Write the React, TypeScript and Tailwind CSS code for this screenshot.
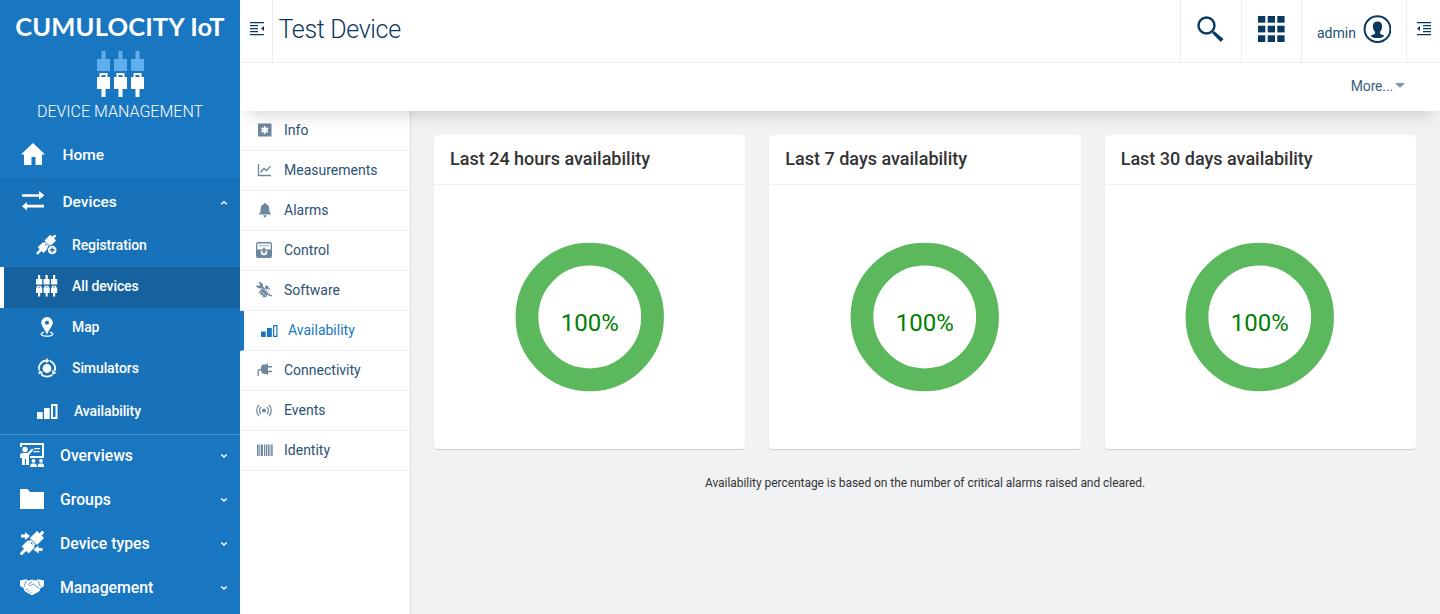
import React from "react";

type IconProps = { w: number; h: number; className?: string; children: React.ReactNode };

function Svg({ w, h, className = "", children }: IconProps) {
  return (
    <svg width={w} height={h} viewBox={`0 0 ${w} ${h}`} fill="currentColor" className={`shrink-0 ${className}`}>
      {children}
    </svg>
  );
}

function LogoIcon() {
  return (
    <Svg w={48} h={47} className="mt-3">
      {[0.5, 17.5, 34.5].map((x) => (
        <g key={x} transform={`translate(${x} 0)`}>
          <path d="M5 0h4v8h4.500v12H.5V8H5z" fill="#61aeee" />
          <path d="M3 22h8v4h2.500v12H9v8H5v-8H.5V26H3zM5 24v2h4v-2z" fillRule="evenodd" fill="#fff" />
        </g>
      ))}
    </Svg>
  );
}

function HomeIcon() {
  return (
    <Svg w={24} h={22}>
      <path d="M12 0 24 11.5h-3V22h-6.500v-8h-4v8H3V11.500H0z" />
    </Svg>
  );
}

function ArrowsIcon() {
  return (
    <Svg w={22} h={20}>
      <path d="M0 3.200h17V0l5.500 4.500-5.500 4V5.800H0zM22 13.800H5V11L0 15.300l5 4.200v-2.900h17z" />
    </Svg>
  );
}

function Plug() {
  return (
    <>
      <path d="M-1.300-14h2.600v3.500h3v8.700h-8.600v-8.700h3z" />
      <path d="M-3-1.200h6v2h1.300v7.700h-3v5.500h-2.600V8.500h-3V.8H-3zM-1.200 0v.9h2.400V0z" fillRule="evenodd" />
    </>
  );
}

function RegistrationIcon() {
  return (
    <Svg w={22} h={20}>
      <g transform="translate(10.200 9.500) rotate(45) scale(.94)">
        <Plug />
      </g>
      <circle cx="16.200" cy="15" r="5.200" fill="#1872ba" />
      <circle cx="16.200" cy="15" r="4.300" />
      <path d="M15.500 12.400h1.400v1.900h1.900v1.400h-1.900v1.900h-1.400v-1.900h-1.900v-1.400h1.900z" fill="#1872ba" />
    </Svg>
  );
}

function AllDevicesIcon() {
  return (
    <Svg w={22} h={22}>
      {[0, 7.500, 15].map((x) => (
        <g key={x} transform={`translate(${x} 0)`}>
          <path d="M2 0h2.200v4h2v5.500H0V4h2z" />
          <path d="M1 10.700h4.200v1.800h1V18h-2v3.500H2V18H0v-5.500h1zM2.200 11.700v.8H4v-.8z" fillRule="evenodd" />
        </g>
      ))}
    </Svg>
  );
}

function MapIcon() {
  return (
    <Svg w={14} h={20}>
      <path
        d="M7 0a5.800 5.800 0 0 1 5.800 5.800c0 3-3.500 6.400-5.800 11.700C4.700 12.200 1.200 8.800 1.200 5.800A5.800 5.800 0 0 1 7 0zm0 3.700a2 2 0 1 0 0 4.100 2 2 0 0 0 0-4.100z"
        fillRule="evenodd"
      />
      <path d="M4 15.200C-1 16.500 1 19.200 7 19.200s8-2.700 3-4" fill="none" stroke="currentColor" strokeWidth="1.300" />
    </Svg>
  );
}

function SimulatorsIcon() {
  return (
    <Svg w={20} h={20}>
      <circle cx="10" cy="10.500" r="4.400" />
      {[0, 120, 240].map((a) => (
        <g key={a} transform={`rotate(${a} 10 10.500)`}>
          <path d="M12.800 2.800A8.300 8.300 0 0 1 18 12.500" fill="none" stroke="currentColor" strokeWidth="1.800" />
          <path d="M8.900 2.900 5.500 3.500" stroke="currentColor" strokeWidth="1.600" />
          <path d="M9 0l3.600 2.600L9 5.400z" />
        </g>
      ))}
    </Svg>
  );
}

function BarsIcon({ small = false }: { small?: boolean }) {
  return small ? (
    <Svg w={17} h={13}>
      <path d="M0 7.500h4.800V13H0zM6 4h4.800v9H6zM12 1h4.500v12H12zm1.200 1.200v9.600h2.100V2.200z" fillRule="evenodd" />
    </Svg>
  ) : (
    <Svg w={21} h={15}>
      <path d="M0 8h5.700v7H0zM7 4h5.700v11H7zM14 0h6.500v15H14zm2 2v11h2.500V2z" fillRule="evenodd" />
    </Svg>
  );
}

function OverviewsIcon() {
  return (
    <Svg w={24} h={24}>
      <path d="M0 0h24v15H10v-2h12V2H2v2H0z" />
      <circle cx="5" cy="6.500" r="2.700" />
      <path d="M1.500 10h6L12 5.500l1.500 1.300L9 12v10H6v-6H5v6H2v-7H0v-3.500z" />
      <path d="M14 5h6v1.300h-6zM13.500 8h6v1.200h-6z" />
      <circle cx="13.500" cy="17.800" r="1.900" />
      <circle cx="21" cy="17.800" r="1.900" />
      <path d="M10.200 24v-2l1.500-1.500h3.600l1.500 1.500v2zM17.700 24v-2l1.500-1.500h3.600L24 22v2z" />
    </Svg>
  );
}

function FolderIcon() {
  return (
    <Svg w={24} h={20}>
      <path d="M0 0h7.500L10 3h14v17H0z" />
    </Svg>
  );
}

function DeviceTypesIcon() {
  return (
    <Svg w={24} h={24}>
      <g transform="translate(12 12) rotate(45) scale(1.150)">
        <Plug />
      </g>
      <path d="M1 3.500h4V1l5 4-5 4V6.500H1zM22.500 17h-4v-2.600l-5 4 5 4V20h4z" />
    </Svg>
  );
}

function HandshakeIcon() {
  return (
    <Svg w={24} h={17}>
      <path d="M0 1.500 6 .3l2.500 1.200L12 .5l3.500 1L18 .3l6 1.200v5.500l-3.500 2.300-1 2.700-2.700 1.800L12.500 16l-2-.3L4.500 12 3.500 9 0 7z" />
      <path
        d="M12.500 2 8.500 5.300q.8 2 3 .7l2-1.100 6 5M6 1.500 4 8M18 1.500l2.300 6M5.500 11.500l2-2M7.500 13l2-2M9.500 14.800l2-2"
        fill="none"
        stroke="#1976c1"
        strokeWidth=".7"
      />
    </Svg>
  );
}

function Chevron({ up = false }: { up?: boolean }) {
  return (
    <Svg w={8} h={6}>
      <path
        d={up ? "M1.300 4.300 4 1.800l2.700 2.500" : "M1.300 1.500 4 4l2.700-2.500"}
        fill="none"
        stroke="currentColor"
        strokeWidth="1.500"
      />
    </Svg>
  );
}

function CollapseIcon({ flip = false }: { flip?: boolean }) {
  return (
    <Svg w={14} h={14} className="text-[#0b385f]">
      {flip ? (
        <path d="M0 0h14v1.200H0zM6 3h8v1.200H6zM6 6h8v1.200H6zM6 9h8v1.200H6zM0 12h14v1.200H0zM3 4v5L0 6.500z" />
      ) : (
        <path d="M0 0h14v1.200H0zM0 3h8v1.200H0zM0 6h8v1.200H0zM0 9h8v1.200H0zM0 12h14v1.200H0zM14 4v5l-3-2.500z" />
      )}
    </Svg>
  );
}

function InfoIcon() {
  return (
    <Svg w={16} h={16}>
      <path d="M2 1.500h13.500v13H2z" />
      <path d="M8.750 4.300v7.400M5.500 6.200l6.500 3.700M12 6.200 5.500 9.900" stroke="#fff" strokeWidth="1.900" />
    </Svg>
  );
}

function MeasurementsIcon() {
  return (
    <Svg w={16} h={16}>
      <path
        d="M2.500 2v11.500H15M4.500 10.500l3.500-4 2.500 2 4-4.200"
        fill="none"
        stroke="currentColor"
        strokeWidth="1.300"
      />
    </Svg>
  );
}

function BellIcon() {
  return (
    <Svg w={16} h={16}>
      <path d="M9 1c.7 0 1 .4 1 1 2.300.6 3.300 2.400 3.300 5 0 2.800.4 4 1.700 4.800v.7H3v-.7c1.300-.8 1.700-2 1.700-4.800 0-2.600 1-4.400 3.300-5 0-.6.300-1 1-1zM7.300 13.200h3.400C10.500 16 7.500 16 7.300 13.200z" />
    </Svg>
  );
}

function ControlIcon() {
  return (
    <Svg w={16} h={16}>
      <path
        d="M2 0h12q2 0 2 2v12q0 2-2 2H2q-2 0-2-2V2q0-2 2-2zm0 1.500q-.7 0-.7.700V7.500h13.400V2.200q0-.7-.7-.700z"
        fillRule="evenodd"
      />
      <path d="M3 3.800h10" stroke="currentColor" strokeWidth="1" strokeDasharray="1.500 .7" />
      <path d="M8 5.200 10 8H6z" />
      <path d="M4.800 8.800h6.400v1.700a3.200 2.700 0 0 1-6.400 0z" fill="#fff" />
      <circle cx="8" cy="9.800" r="1.600" />
    </Svg>
  );
}

function SoftwareIcon() {
  return (
    <Svg w={16} h={16}>
      <path d="M2.500 0 5 .5 7 2.500v2L14.500 13 16 13l-.5 1.500L13 14 5.300 6.200 3 6.500 0 4.500v-1l3 .5 1-1.200z" />
      <path d="m9 3.500 3 .5v3L9.500 7zM4 8l3.500-1.500L12 11l-1.500 4-2 .3-4.500-4.300z" />
      <path
        d="m2.500 10.500 5.500-2M4 13l5.500-3M6.500 15.500l4.500-4M10 5l3.500 3M12.300 5.300l1.500 2"
        fill="none"
        stroke="currentColor"
        strokeWidth="1"
      />
      <path d="m4.500 8.500 6 6M7 6.500l6 6" stroke="#fff" strokeWidth=".6" />
    </Svg>
  );
}

function ConnectivityIcon() {
  return (
    <Svg w={16} h={16}>
      <path d="M7 2.500h3.500V1.500H12v2.400h4v1.500h-4v3.400h4v1.500h-4v2.400h-1.500V12H8.800C6.500 12 5 10.500 5 8.200l-1.500.3q-.7.200-.7 1V14H1.500V9q0-1.500 1.300-1.800L5 6.700C5 4.500 5.500 3 7 2.500z" />
    </Svg>
  );
}

function EventsIcon() {
  return (
    <Svg w={16} h={16}>
      <circle cx="8" cy="8.500" r="2" />
      <path
        d="M5 5a5 5 0 0 0 0 7M11 5a5 5 0 0 1 0 7M3 3a7.700 7.700 0 0 0 0 11M13 3a7.700 7.700 0 0 1 0 11"
        fill="none"
        stroke="currentColor"
        strokeWidth="1.200"
      />
    </Svg>
  );
}

function BarcodeIcon() {
  return (
    <Svg w={17} h={16}>
      <path d="M1 2.500h1.600v11.500H1zM3.300 2.500h1v11.500h-1zM5 2.500h2v11.500H5zM8 2.500h1v11.500H8zM9.700 2.500h1.600v11.500H9.700zM12 2.500h1v11.500h-1zM13.500 2.500h1v11.500h-1zM15.200 2.500h1.500v11.500h-1.500z" />
    </Svg>
  );
}

const subItems = [
  { label: "Registration", icon: <RegistrationIcon /> },
  { label: "All devices", icon: <AllDevicesIcon />, active: true },
  { label: "Map", icon: <MapIcon /> },
  { label: "Simulators", icon: <SimulatorsIcon /> },
];

const groups = [
  { label: "Overviews", icon: <OverviewsIcon /> },
  { label: "Groups", icon: <FolderIcon /> },
  { label: "Device types", icon: <DeviceTypesIcon /> },
  { label: "Management", icon: <HandshakeIcon /> },
];

const tabs = [
  { label: "Info", icon: <InfoIcon /> },
  { label: "Measurements", icon: <MeasurementsIcon /> },
  { label: "Alarms", icon: <BellIcon /> },
  { label: "Control", icon: <ControlIcon /> },
  { label: "Software", icon: <SoftwareIcon /> },
  { label: "Availability", icon: <BarsIcon small />, active: true },
  { label: "Connectivity", icon: <ConnectivityIcon /> },
  { label: "Events", icon: <EventsIcon /> },
  { label: "Identity", icon: <BarcodeIcon /> },
];

function Sidebar() {
  return (
    <aside className="relative z-20 flex w-60 shrink-0 flex-col bg-[#1976c1] text-white">
      <div className="flex h-[131px] flex-col items-center pt-3">
        <div className="h-[27px] font-['Lato'] text-[25.5px] leading-[29px] font-bold tracking-[0.15px] whitespace-nowrap">
          CUMULOCITY IoT
        </div>
        <LogoIcon />
        <div className="mt-0.5 text-base leading-6 font-light whitespace-nowrap">DEVICE MANAGEMENT</div>
      </div>
      <div className="flex h-12 items-center pb-0.5 pl-[21px]">
        <HomeIcon />
        <span className="mt-[3px] ml-[17.5px] text-[15.5px] font-medium">Home</span>
      </div>
      <div className="h-64 border-t border-b border-t-[#166bae] border-b-[#4791cd] bg-[#1872ba] text-sm font-medium tracking-[-0.1px]">
        <div className="flex h-[46px] items-center pr-3 pb-1 pl-[22px] text-[15.5px] tracking-normal">
          <ArrowsIcon />
          <span className="mt-[3px] ml-[18.5px] flex-1">Devices</span>
          <span className="mt-1">
            <Chevron up />
          </span>
        </div>
        {subItems.map((s) => (
          <div
            key={s.label}
            className={`flex h-[41px] items-center border-l-4 pb-[3px] ${s.active ? "border-white bg-[#15629f]" : "border-transparent"}`}
          >
            <span className="ml-7 flex w-[29px] justify-center">{s.icon}</span>
            <span className="ml-[11px]">{s.label}</span>
          </div>
        ))}
        <div className="flex h-[42px] items-center pl-[37px]">
          <BarsIcon />
          <span className="ml-4">Availability</span>
        </div>
      </div>
      {groups.map((g) => (
        <div key={g.label} className="flex h-11 items-center pr-3 pb-0.5 pl-5">
          <span className="flex w-6 justify-center pb-0.5">{g.icon}</span>
          <span className="ml-4 flex-1 text-[15.8px] font-medium">{g.label}</span>
          <Chevron />
        </div>
      ))}
    </aside>
  );
}

function Header() {
  return (
    <header className="relative z-10 h-[111px] shrink-0 bg-white text-[#0b385f] shadow-[0_10px_18px_-8px_rgba(0,0,0,0.2)]">
      <div className="flex h-[63px] border-b border-[#ebecee]">
        <div className="w-[33px] border-r border-[#ebecee] pt-[22px] pl-2.5">
          <CollapseIcon />
        </div>
        <h1 className="flex-1 pt-3 pl-[5.5px] text-[25px] leading-9 font-light tracking-[-0.35px]">Test Device</h1>
        <div className="w-[62px] border-x border-[#ebecee] pt-4 pl-4">
          <Svg w={27} h={27}>
            <circle cx="9.500" cy="9.500" r="8" fill="none" stroke="currentColor" strokeWidth="2.400" />
            <path d="m15 17 2-2 9.500 8-2.700 3z" />
          </Svg>
        </div>
        <div className="flex w-[60px] justify-center border-r border-[#ebecee] pt-4">
          <Svg w={27} h={26}>
            {[0, 9.700, 19.300].map((y) =>
              [0, 9.700, 19.300].map((x) => <rect key={`${x}-${y}`} x={x} y={y} width="7.300" height="6.700" />),
            )}
          </Svg>
        </div>
        <div className="flex w-[105px] items-start border-r border-[#ebecee] pl-[15px] text-sm">
          <span className="mt-[23px] w-[46px] leading-5 text-[#24507a]">admin</span>
          <Svg w={28} h={28} className="mt-[15px]">
            <circle cx="14.500" cy="14.200" r="12.900" fill="none" stroke="currentColor" strokeWidth="2" />
            <path d="M14.500 6.500c3.200 0 4.600 2 4.600 4.800 0 2.400-.8 4.200-2 5.400v2c.5 1 3.500 1 4.200 2.200-1.700 1.700-4 2.200-6.800 2.200s-5.100-.5-6.800-2.200c.7-1.200 3.700-1.200 4.200-2.200v-2c-1.200-1.200-2-3-2-5.400 0-2.800 1.400-4.800 4.600-4.800z" />
          </Svg>
        </div>
        <div className="w-[33px] pt-[22px] pl-2.5">
          <CollapseIcon flip />
        </div>
      </div>
      <div className="flex h-[46px] items-center justify-end gap-0.5 pr-[35px] text-sm">
        <span className="tracking-[-0.15px] text-[#3d607f]">More...</span>
        <Svg w={10} h={6} className="text-[#8198ad]">
          <path d="M0 0h10L5 5z" />
        </Svg>
      </div>
    </header>
  );
}

function AvailabilityCard({ title }: { title: string }) {
  return (
    <section className="flex h-[314px] flex-1 flex-col rounded-sm bg-white shadow-[0_1px_1px_rgba(0,0,0,0.15)]">
      <h2 className="h-[50px] border-b border-[#eef0f1] px-4 text-lg leading-[47px] font-medium whitespace-nowrap text-[#333]">
        {title}
      </h2>
      <div className="flex flex-1 items-start justify-center pt-[57px]">
        <svg width="150" height="150" viewBox="0 0 150 150">
          <circle cx="74.750" cy="75" r="62.800" fill="none" stroke="#5cb85c" strokeWidth="22.800" />
          <text x="74.750" y="89" textAnchor="middle" fill="green" className="text-2xl">
            100%
          </text>
        </svg>
      </div>
    </section>
  );
}

export default function App() {
  return (
    <div className="flex h-[614px] w-[1440px] overflow-hidden bg-[#f1f2f4] font-['Roboto',sans-serif]">
      <Sidebar />
      <div className="flex min-w-0 flex-1 flex-col">
        <Header />
        <div className="flex min-h-0 flex-1">
          <nav className="w-[171px] shrink-0 border-r border-[#dcdee0] bg-white text-sm text-[#2c5273]">
            {tabs.map((t) => (
              <div
                key={t.label}
                className={`flex h-10 items-center border-b border-[#ebecee] ${t.active ? "border-l-4 border-l-[#1976c1] pl-[17px] text-[#1976c1]" : "pl-4"}`}
              >
                <span className={`flex pb-px ${t.active ? "w-[27px]" : "w-7 text-[#6d879e]"}`}>{t.icon}</span>
                <span className="pb-0.5">{t.label}</span>
              </div>
            ))}
          </nav>
          <main className="flex-1 px-6 pt-6 pl-[23px]">
            <div className="flex gap-6">
              <AvailabilityCard title="Last 24 hours availability" />
              <AvailabilityCard title="Last 7 days availability" />
              <AvailabilityCard title="Last 30 days availability" />
            </div>
            <p className="mt-6 text-center text-xs leading-5 tracking-[-0.05px] text-[#333]">
              Availability percentage is based on the number of critical alarms raised and cleared.
            </p>
          </main>
        </div>
      </div>
    </div>
  );
}
